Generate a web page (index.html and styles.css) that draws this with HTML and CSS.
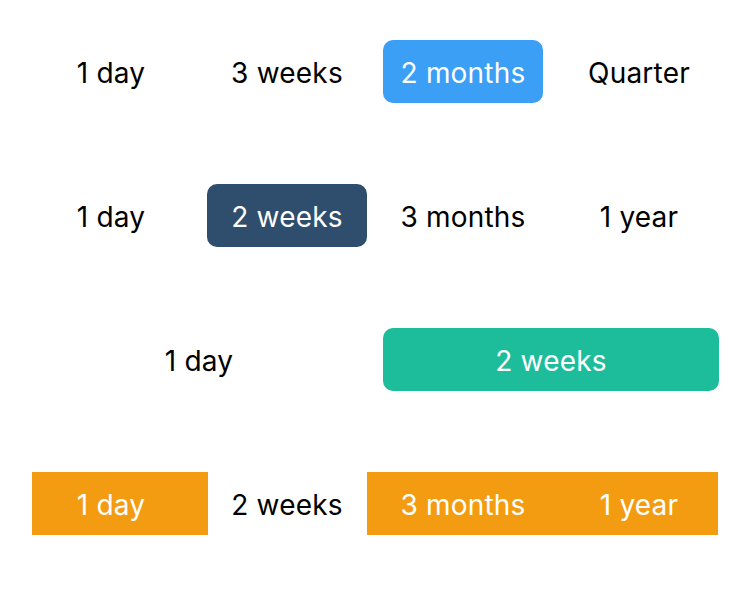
FILE: index.html
```html
<!DOCTYPE html>
<html>
<head>
<meta charset="utf-8">
<link rel="stylesheet" href="styles.css">
</head>
<body>
<div class="page">
  <div class="seg four">
    <div class="cell">1 day</div>
    <div class="cell">3 weeks</div>
    <div class="cell pill blue">2 months</div>
    <div class="cell">Quarter</div>
  </div>
  <div class="seg four">
    <div class="cell">1 day</div>
    <div class="cell pill dark">2 weeks</div>
    <div class="cell">3 months</div>
    <div class="cell">1 year</div>
  </div>
  <div class="seg two">
    <div class="cell">1 day</div>
    <div class="cell pill teal">2 weeks</div>
  </div>
  <div class="seg four flat">
    <div class="cell on first">1 day</div>
    <div class="cell">2 weeks</div>
    <div class="cell on third">3 months</div>
    <div class="cell on fourth">1 year</div>
  </div>
</div>
</body>
</html>
```
FILE: styles.css
```css
* { box-sizing: border-box; }
html, body { margin: 0; background: #fff; }
body {
  font-family: "Inter", "Liberation Sans", sans-serif;
  font-size: 28px;
  letter-spacing: 0.2px;
  color: #000;
}
.page {
  padding: 40px 23px 0;
  display: flex;
  flex-direction: column;
  gap: 81px;
}
.seg {
  display: grid;
  height: 63px;
}
.seg.four { grid-template-columns: repeat(4, 176px); }
.seg.two { grid-template-columns: repeat(2, 352px); }
.cell {
  position: relative;
  display: flex;
  align-items: center;
  justify-content: center;
  height: 63px;
  padding-top: 2px;
  z-index: 0;
}
.pill {
  margin: 0 8px;
  border-radius: 10px;
  color: #fff;
}
.blue { background: #3a9ff5; }
.dark { background: #2f4d6d; }
.teal { background: #1dbd9c; }
.on { color: #fff; }
.on::before {
  content: "";
  position: absolute;
  top: 0;
  bottom: 0;
  background: #f39c12;
  z-index: -1;
}
.first::before { left: 9px; right: -9px; }
.third::before { left: -8px; right: 0; }
.fourth::before { left: 0; right: 9px; }
```
